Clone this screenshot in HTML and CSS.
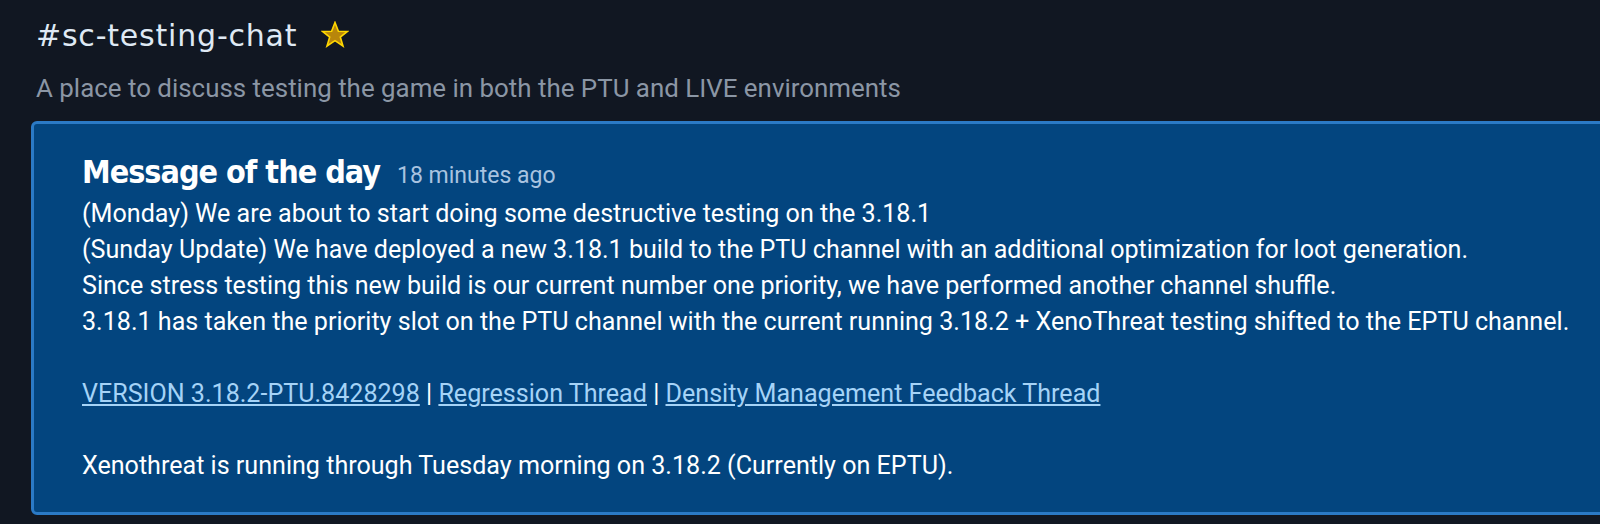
FILE: index.html
```html
<!DOCTYPE html>
<html lang="en">
<head>
  <meta charset="UTF-8">
  <meta name="viewport" content="width=device-width, initial-scale=1.0">
  <title>#sc-testing-chat</title>
  <link rel="stylesheet" href="styles.css">
</head>
<body>
  <div class="page">
    <header class="channel-head">
      <h1 class="channel-title">
        #sc-testing-chat
        <svg class="star" viewBox="0 0 28 28" width="28" height="28" aria-label="Favorite">
          <polygon points="14,1.5 17.4,10.2 26.6,10.4 19.3,16 22,25 14,19.7 6,25 8.7,16 1.4,10.4 10.6,10.2" fill="#b8860b" stroke="#ffd700" stroke-width="1.6" stroke-linejoin="miter"/>
        </svg>
      </h1>
      <p class="channel-desc">A place to discuss testing the game in both the PTU and LIVE environments</p>
    </header>

    <section class="motd">
      <div class="motd-head">
        <h2 class="motd-title">Message of the day</h2>
        <span class="motd-time">18 minutes ago</span>
      </div>
      <div class="motd-body">
        (Monday) We are about to start doing some destructive testing on the 3.18.1<br>
        (Sunday Update) We have deployed a new 3.18.1 build to the PTU channel with an additional optimization for loot generation.<br>
        Since stress testing this new build is our current number one priority, we have performed another channel shuffle.<br>
        3.18.1 has taken the priority slot on the PTU channel with the current running 3.18.2 + XenoThreat testing shifted to the EPTU channel.<br>
        <br>
        <a href="#">VERSION 3.18.2-PTU.8428298</a> | <a href="#">Regression Thread</a> | <a href="#">Density Management Feedback Thread</a><br>
        <br>
        Xenothreat is running through Tuesday morning on 3.18.2 (Currently on EPTU).
      </div>
    </section>
  </div>
</body>
</html>
```

FILE: styles.css
```css
html,
body {
  margin: 0;
  overflow: hidden;
}

body {
  background: #111722;
  color: #ffffff;
  font-family: Roboto, 'Liberation Sans', sans-serif;
}

.page {
  padding: 14px 0 0 31px;
}

.channel-head {
  padding-left: 5px;
}

.channel-title {
  display: flex;
  align-items: center;
  gap: 24px;
  margin: 0;
  font-family: 'DejaVu Sans', sans-serif;
  font-weight: normal;
  font-size: 30px;
  line-height: 44px;
  letter-spacing: 0.8px;
  color: #dfe9f4;
}

.star {
  display: block;
  margin-top: -2px;
}

.channel-desc {
  margin: 15px 0 0;
  font-size: 25.9px;
  line-height: 30px;
  color: #8b96a5;
}

.motd {
  margin: 18px -40px 0 0;
  padding: 28px 48px 28px;
  background: #03457f;
  border: 3px solid #2b7ac6;
  border-radius: 6px;
}

.motd-head {
  display: flex;
  align-items: baseline;
  gap: 17px;
  height: 40px;
  margin-bottom: 4px;
}

.motd-title {
  margin: 0;
  font-family: 'DejaVu Sans Condensed', 'DejaVu Sans', sans-serif;
  font-weight: bold;
  font-size: 32px;
  line-height: 40px;
  letter-spacing: -1px;
}

.motd-time {
  font-size: 23px;
  color: #a9c3e0;
}

.motd-body {
  font-size: 25.1px;
  line-height: 36px;
}

.motd-body a {
  color: #a5d3f7;
}
```
